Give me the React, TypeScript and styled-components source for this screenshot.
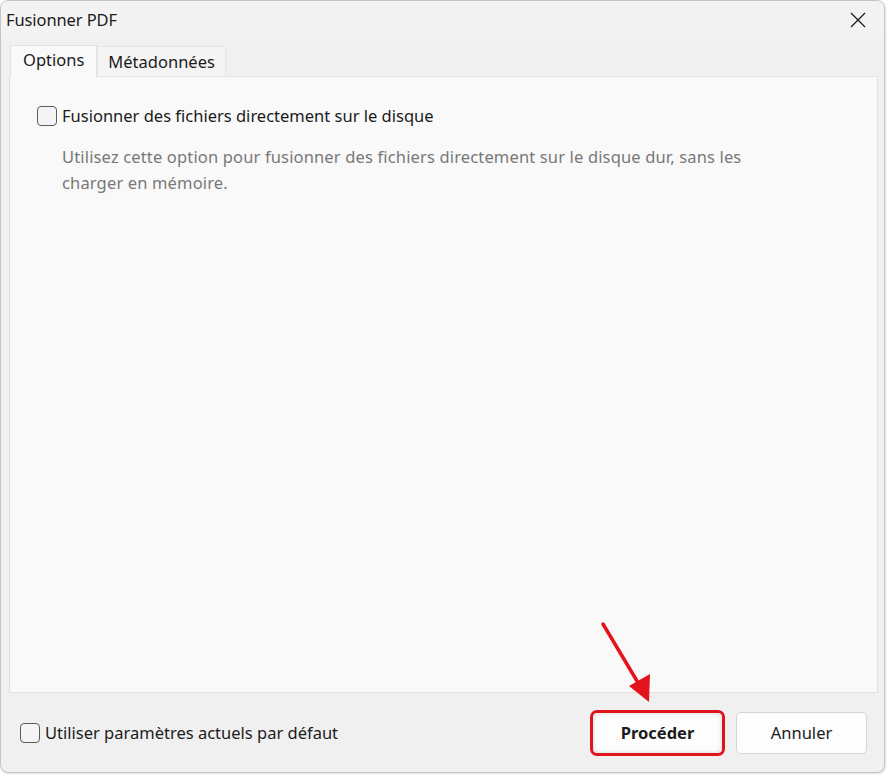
import React from "react";
import styled, { createGlobalStyle } from "styled-components";

const Global = createGlobalStyle`
  html, body { margin: 0; padding: 0; background: #ffffff; }
  body { font-family: "Noto Sans", "Open Sans", "Liberation Sans", sans-serif; }
  * { box-sizing: border-box; }
`;

const Stage = styled.div`
  position: relative;
  width: 889px;
  height: 776px;
`;

const Window = styled.div`
  width: 885px;
  height: 773px;
  border: 1px solid #c4c4c4;
  border-radius: 8px;
  background: #f0f0f0;
  display: flex;
  flex-direction: column;
  overflow: hidden;
  box-shadow: 1px 1px 2px rgba(0, 0, 0, 0.12);
`;

const TitleBar = styled.div`
  height: 38px;
  flex: none;
  display: flex;
  align-items: center;
  justify-content: space-between;
  padding-left: 5px;
  background: #f3f3f3;
`;

const Title = styled.span`
  font-size: 16.5px;
  color: #1b1b1b;
  letter-spacing: -0.1px;
  margin-top: -2px;
`;

const CloseButton = styled.button`
  width: 48px;
  height: 38px;
  border: none;
  background: transparent;
  display: flex;
  align-items: center;
  justify-content: center;
  padding: 0;
  margin-right: 2px;
`;

const TabStrip = styled.div`
  display: flex;
  align-items: flex-end;
  padding: 5px 0 0 9px;
  height: 37px;
  flex: none;
`;

const Tab = styled.div<{ $active?: boolean }>`
  height: ${(p) => (p.$active ? "32px" : "30px")};
  padding: 0 ${(p) => (p.$active ? "12px" : "10px")};
  display: flex;
  align-items: center;
  font-size: 16.5px;
  color: #1b1b1b;
  background: ${(p) => (p.$active ? "#f9f9f9" : "#f4f4f4")};
  border: 1px solid ${(p) => (p.$active ? "#e2e2e2" : "#e6e6e6")};
  border-bottom: none;
  position: relative;
  z-index: ${(p) => (p.$active ? 2 : 1)};
  margin-bottom: ${(p) => (p.$active ? "-1px" : "0")};
  padding-bottom: ${(p) => (p.$active ? "4px" : "0")};
`;

const Panel = styled.div`
  margin: 0 6px 0 8px;
  height: 617px;
  flex: none;
  background: #f9f9f9;
  border: 1px solid #e2e2e2;
  padding: 27px 0 0 27px;
  position: relative;
  z-index: 1;
`;

const CheckRow = styled.label`
  display: flex;
  align-items: center;
  gap: 5px;
  font-size: 16.5px;
  color: #1b1b1b;
`;

const Box = styled.span`
  width: 20px;
  height: 20px;
  border: 1px solid #5d5d5d;
  border-radius: 4px;
  background: #f4f4f4;
  flex: none;
`;

const Description = styled.p`
  margin: 17px 0 0 25px;
  width: 720px;
  font-size: 16.5px;
  line-height: 26px;
  letter-spacing: 0.15px;
  color: #787878;
`;

const Footer = styled.div`
  flex: 1;
  display: flex;
  align-items: center;
  justify-content: space-between;
  padding: 0 17px 0 19px;
`;

const Buttons = styled.div`
  display: flex;
  align-items: center;
  gap: 11px;
`;

const Highlight = styled.div`
  border: 3px solid #e0141c;
  border-radius: 7px;
  padding: 0;
  display: flex;
`;

const Button = styled.button<{ $primary?: boolean }>`
  width: ${(p) => (p.$primary ? "129px" : "131px")};
  height: ${(p) => (p.$primary ? "40px" : "42px")};
  border: ${(p) => (p.$primary ? "none" : "1px solid #d3d3d3")};
  border-radius: 5px;
  background: #fdfdfd;
  font-family: inherit;
  font-size: 16.5px;
  font-weight: ${(p) => (p.$primary ? 700 : 400)};
  color: #1b1b1b;
  padding: 0;
  box-shadow: ${(p) => (p.$primary ? "0 0 4px rgba(0,0,0,0.18) inset" : "none")};
`;

const ArrowOverlay = styled.svg`
  position: absolute;
  left: 0;
  top: 0;
  z-index: 10;
  pointer-events: none;
`;

export default function App() {
  return (
    <Stage>
      <Global />
      <Window>
        <TitleBar>
          <Title>Fusionner PDF</Title>
          <CloseButton aria-label="Fermer">
            <svg width="18" height="18" viewBox="0 0 18 18">
              <path d="M2 2 L16 16 M16 2 L2 16" stroke="#1b1b1b" strokeWidth="1.3" fill="none" />
            </svg>
          </CloseButton>
        </TitleBar>
        <TabStrip>
          <Tab $active>Options</Tab>
          <Tab>Métadonnées</Tab>
        </TabStrip>
        <Panel>
          <CheckRow>
            <Box />
            Fusionner des fichiers directement sur le disque
          </CheckRow>
          <Description>
            Utilisez cette option pour fusionner des fichiers directement sur le disque dur, sans les
            <br />
            charger en mémoire.
          </Description>
        </Panel>
        <Footer>
          <CheckRow>
            <Box />
            Utiliser paramètres actuels par défaut
          </CheckRow>
          <Buttons>
            <Highlight>
              <Button $primary>Procéder</Button>
            </Highlight>
            <Button>Annuler</Button>
          </Buttons>
        </Footer>
      </Window>
      <ArrowOverlay width="889" height="776" viewBox="0 0 889 776">
        <line x1="603" y1="624" x2="640" y2="686" stroke="#e3141c" strokeWidth="3.5" strokeLinecap="round" />
        <polygon points="649,702 629,686 650,674" fill="#e3141c" />
      </ArrowOverlay>
    </Stage>
  );
}
